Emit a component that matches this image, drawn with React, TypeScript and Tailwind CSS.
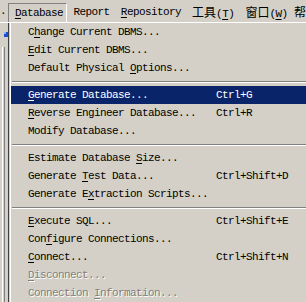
import React from "react";

type Item =
  | { sep: true }
  | { sep?: false; pre: string; u?: string; post?: string; sc?: string; hl?: boolean; dis?: boolean };

const items: Item[] = [
  { pre: "C", u: "h", post: "ange Current DBMS..." },
  { pre: "", u: "E", post: "dit Current DBMS..." },
  { pre: "Default Physical ", u: "O", post: "ptions..." },
  { sep: true },
  { pre: "", u: "G", post: "enerate Database...", sc: "Ctrl+G", hl: true },
  { pre: "", u: "R", post: "everse Engineer Database...", sc: "Ctrl+R" },
  { pre: "Modify Database..." },
  { sep: true },
  { pre: "Estimate Database ", u: "S", post: "ize..." },
  { pre: "Generate ", u: "T", post: "est Data...", sc: "Ctrl+Shift+D" },
  { pre: "Generate E", u: "x", post: "traction Scripts..." },
  { sep: true },
  { pre: "", u: "E", post: "xecute SQL...", sc: "Ctrl+Shift+E" },
  { pre: "Con", u: "f", post: "igure Connections..." },
  { pre: "", u: "C", post: "onnect...", sc: "Ctrl+Shift+N" },
  { pre: "", u: "D", post: "isconnect...", dis: true },
  { pre: "Connection ", u: "I", post: "nformation...", dis: true },
];

const mono = { fontFamily: '"Liberation Mono", "Noto Sans CJK SC", monospace' };
const cjk = { fontFamily: '"Noto Sans CJK SC", sans-serif' };

export default function App() {
  return (
    <div
      className="relative w-[306px] h-[302px] overflow-hidden bg-[#d4d0c8] text-[11px] tracking-[-0.6px] text-black"
      style={mono}
    >
      {/* menu bar */}
      <div className="flex h-[22px] items-start whitespace-nowrap">
        <div className="w-[8px] h-[22px] relative">
          <span className="absolute left-[0px] top-[2px] leading-[18px]">.</span>
        </div>
        <div className="mt-[3px] h-[19px] w-[60px] border-l border-t border-r border-l-[#808080] border-t-[#808080] border-r-white pl-[6px] leading-[18px]">
          <span className="underline underline-offset-2">D</span>atabase
        </div>
        <div className="mt-[3px] ml-[6px] leading-[18px] w-[48px]">Report</div>
        <div className="mt-[3px] leading-[18px] w-[72px]">
          <span className="underline underline-offset-2">R</span>epository
        </div>
        <div className="mt-[3px] leading-[18px] w-[54px]">
          <span className="tracking-normal text-[12px]" style={cjk}>工具</span>(<span className="underline underline-offset-2">T</span>)
        </div>
        <div className="mt-[3px] leading-[18px] w-[49px]">
          <span className="tracking-normal text-[12px]" style={cjk}>窗口</span>(<span className="underline underline-offset-2">W</span>)
        </div>
        <div className="mt-[3px] leading-[18px]">
          <span className="tracking-normal text-[12px]" style={cjk}>帮</span>
        </div>
      </div>
      <div className="h-px w-full bg-white" />
      <div className="flex">
        {/* left toolbar strip */}
        <div className="relative w-[9px] h-[280px] shrink-0">
          <div className="absolute left-[2px] top-[24px] bottom-0 w-px bg-white" />
          <div className="absolute left-[4px] top-[24px] bottom-0 w-px bg-[#808080]" />
          <div className="absolute left-[8px] top-0 bottom-0 w-px bg-[#404040]" />
          <div className="absolute left-[4px] top-[9px] w-[4px] h-[5px] bg-[#1c4fd0]">
            <div className="w-[2px] h-[2px] bg-[#8ab0ff]" />
          </div>
        </div>
        {/* dropdown */}
        <div className="flex-1 border-l border-l-[#d4d0c8]">
          <div className="border-l border-l-white">
            {items.map((it, i) =>
              it.sep ? (
                <div key={i} className="h-[9px] pt-[4px] pl-[1px]">
                  <div className="h-px bg-[#808080]" />
                  <div className="h-px bg-white" />
                </div>
              ) : (
                <div
                  key={i}
                  className={
                    "flex h-[18px] items-center whitespace-nowrap leading-[18px] " +
                    (it.hl ? "bg-[#0a246a] text-white" : "") +
                    (it.dis ? " text-[#808080]" : "")
                  }
                  style={it.dis ? { textShadow: "1px 1px 0 #ffffff" } : undefined}
                >
                  <div className="w-[205px] pl-[17px] shrink-0">
                    {it.pre}
                    {it.u ? <span className="underline underline-offset-2">{it.u}</span> : null}
                    {it.post}
                  </div>
                  {it.sc ? <div>{it.sc}</div> : null}
                </div>
              )
            )}
          </div>
        </div>
      </div>
    </div>
  );
}
